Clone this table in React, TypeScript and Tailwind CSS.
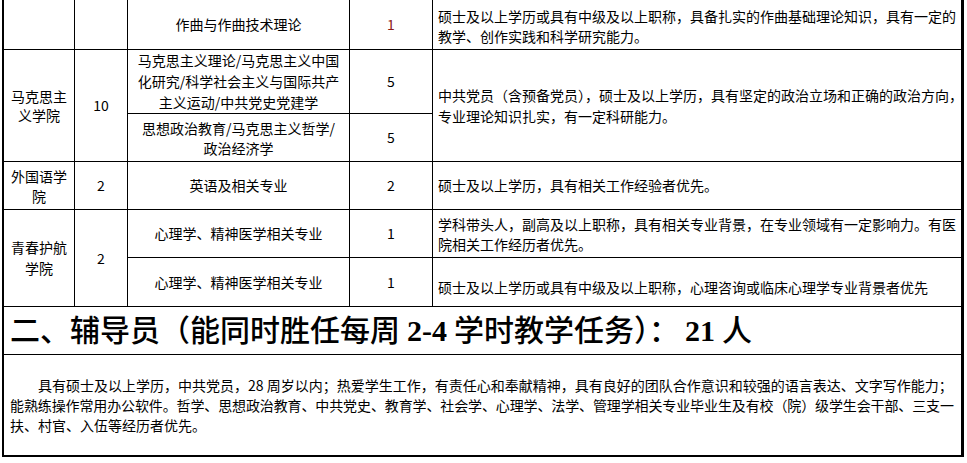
import React from "react";

const c1 = "w-[71px] shrink-0 border-r border-black flex items-center justify-center text-center";
const c2 = "w-[53px] shrink-0 border-r border-black flex items-center justify-center";
const c3 = "w-[222px] shrink-0 border-r border-black flex items-center justify-center text-center whitespace-nowrap";
const c4 = "w-[83px] shrink-0 border-r border-black flex items-center justify-center";
const c5 = "flex-1 flex items-center pl-[5px] whitespace-nowrap";

export default function App() {
  return (
    <div className="w-[967px] h-[463px] bg-white overflow-hidden text-black text-[14px] font-['Noto_Sans_CJK_SC',sans-serif]">
      <div className="ml-[2px] w-[962px] border-l-2 border-r-[3px] border-b-2 border-black">
        {/* 音乐学院最后一行（上面被截掉） */}
        <div className="flex h-[50px] border-b border-black">
          <div className={c1} />
          <div className={c2} />
          <div className={c3}>作曲与作曲技术理论</div>
          <div className={`${c4} text-[#8b1a1a]`}>1</div>
          <div className={`${c5} leading-[20px] pt-[2px]`}>
            <div>
              硕士及以上学历或具有中级及以上职称，具备扎实的作曲基础理论知识，具有一定的
              <br />
              教学、创作实践和科学研究能力。
            </div>
          </div>
        </div>

        {/* 马克思主义学院 */}
        <div className="flex h-[112px] border-b border-black">
          <div className={`${c1} leading-[19px]`}>
            <div>
              马克思主
              <br />
              义学院
            </div>
          </div>
          <div className={c2}>10</div>
          <div className="flex flex-col w-[305px] shrink-0">
            <div className="flex h-[64px] border-b border-black">
              <div className={`${c3} leading-[21px]`}>
                <div>
                  马克思主义理论/马克思主义中国
                  <br />
                  化研究/科学社会主义与国际共产
                  <br />
                  主义运动/中共党史党建学
                </div>
              </div>
              <div className={c4}>5</div>
            </div>
            <div className="flex flex-1">
              <div className={`${c3} leading-[20px]`}>
                <div>
                  思想政治教育/马克思主义哲学/
                  <br />
                  政治经济学
                </div>
              </div>
              <div className={c4}>5</div>
            </div>
          </div>
          <div className={`${c5} leading-[21px]`}>
            <div>
              中共党员（含预备党员），硕士及以上学历，具有坚定的政治立场和正确的政治方向，
              <br />
              专业理论知识扎实，有一定科研能力。
            </div>
          </div>
        </div>

        {/* 外国语学院 */}
        <div className="flex h-[48px] border-b border-black">
          <div className={`${c1} leading-[20px]`}>
            <div>
              外国语学
              <br />
              院
            </div>
          </div>
          <div className={c2}>2</div>
          <div className={c3}>英语及相关专业</div>
          <div className={c4}>2</div>
          <div className={c5}>硕士及以上学历，具有相关工作经验者优先。</div>
        </div>

        {/* 青春护航学院 */}
        <div className="flex h-[97px] border-b border-black">
          <div className={`${c1} leading-[21px]`}>
            <div>
              青春护航
              <br />
              学院
            </div>
          </div>
          <div className={c2}>2</div>
          <div className="flex-1 flex flex-col">
            <div className="flex h-[48px] border-b border-black">
              <div className={c3}>心理学、精神医学相关专业</div>
              <div className={c4}>1</div>
              <div className={`${c5} leading-[20px]`}>
                <div>
                  学科带头人，副高及以上职称，具有相关专业背景，在专业领域有一定影响力。有医
                  <br />
                  院相关工作经历者优先。
                </div>
              </div>
            </div>
            <div className="flex flex-1">
              <div className={c3}>心理学、精神医学相关专业</div>
              <div className={c4}>1</div>
              <div className={`${c5} pt-[10px]`}>
                硕士及以上学历或具有中级及以上职称，心理咨询或临床心理学专业背景者优先
              </div>
            </div>
          </div>
        </div>

        {/* 二、辅导员 */}
        <div className="flex items-center h-[48px] border-b border-black pl-[6px] whitespace-pre text-[30px] font-medium font-['Liberation_Serif','Noto_Sans_CJK_SC',serif]">
          <span>二、辅导员（能同时胜任每周</span>
          <span className="font-bold px-[7px]">2-4</span>
          <span>学时教学任务）：</span>
          <span className="font-bold pl-[6px] pr-[7px]">21</span>
          <span>人</span>
        </div>

        <div className="h-[100px] px-[6px] pt-[20px] leading-[20px]">
          <div className="pl-[28px] whitespace-nowrap">
            具有硕士及以上学历，中共党员，28 周岁以内；热爱学生工作，有责任心和奉献精神，具有良好的团队合作意识和较强的语言表达、文字写作能力；
          </div>
          <div className="whitespace-nowrap tracking-[-0.12px]">
            能熟练操作常用办公软件。哲学、思想政治教育、中共党史、教育学、社会学、心理学、法学、管理学相关专业毕业生及有校（院）级学生会干部、三支一
          </div>
          <div>扶、村官、入伍等经历者优先。</div>
        </div>
      </div>
    </div>
  );
}
